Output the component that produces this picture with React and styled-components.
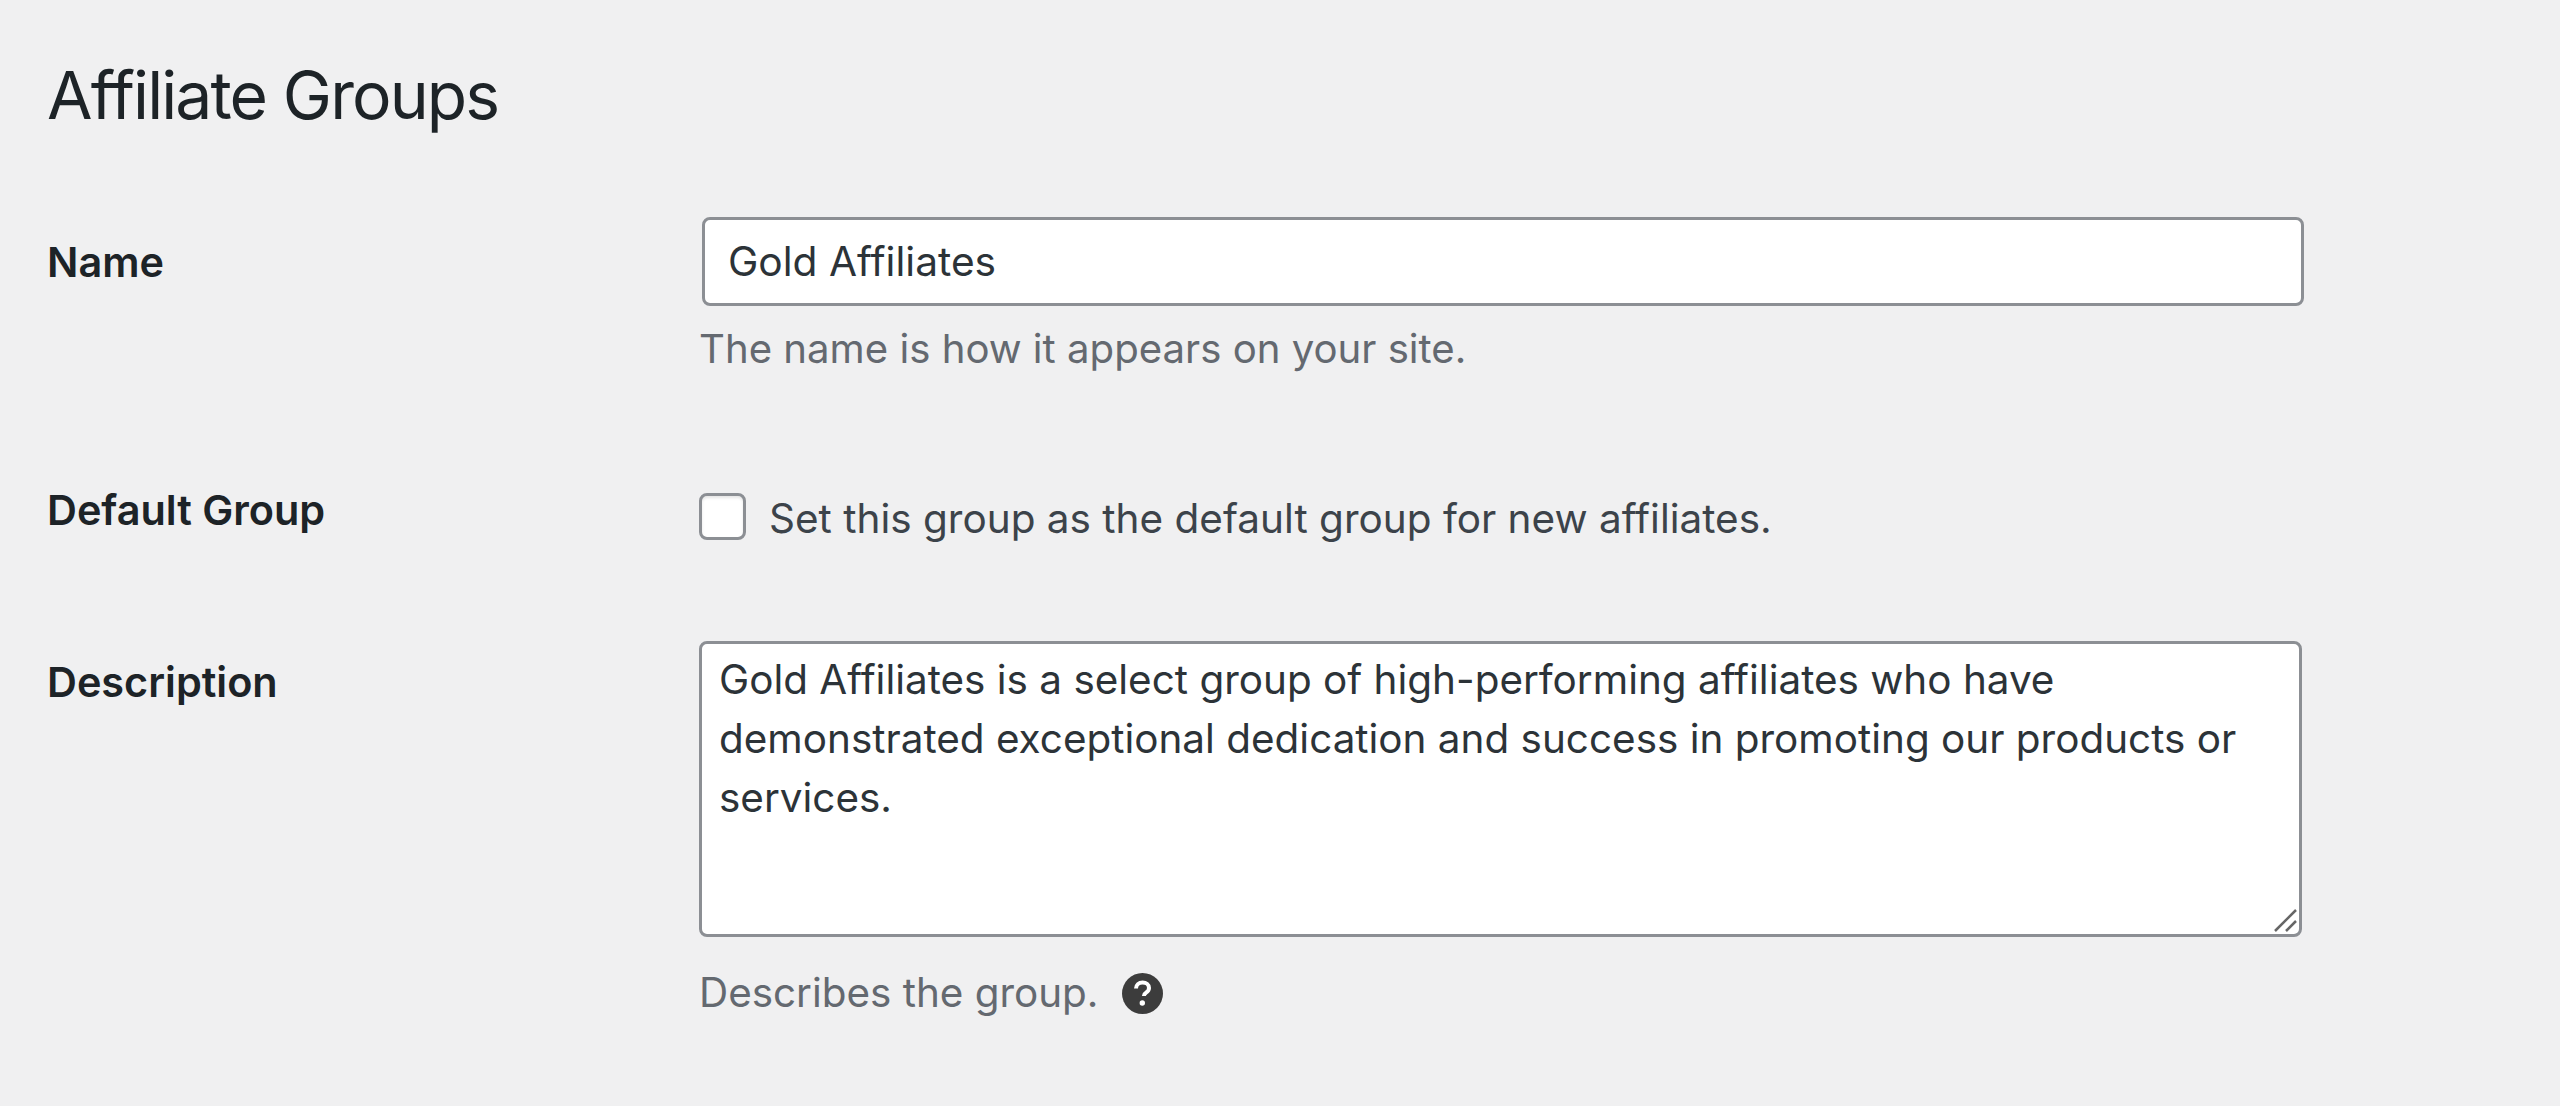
import React from 'react';
import styled, { createGlobalStyle } from 'styled-components';

const Global = createGlobalStyle`
  html, body { margin: 0; padding: 0; background: #f0f0f1; }
  body { font-family: Inter, "Noto Sans", sans-serif; color: #1d2327; min-height: 1106px; overflow: hidden; }
  * { box-sizing: border-box; }
`;
const Page = styled.main`
  padding: 56px 0 0 47px;
`;
const Title = styled.h1`
  margin: 0 0 83px;
  font-size: 66px;
  line-height: 78px;
  font-weight: 400;
  letter-spacing: -1.9px;
  color: #1d2327;
`;
const Row = styled.div`
  display: grid;
  grid-template-columns: 652px 1604px;
  margin-bottom: ${p => p.$gap}px;
`;
const Label = styled.label`
  font-size: 41.4px;
  line-height: 50px;
  font-weight: 600;
  padding-top: ${p => p.$top}px;
  color: #1d2327;
`;
const Field = styled.div`
  display: flex;
  flex-direction: column;
`;
const TextInput = styled.input`
  display: block;
  width: 1602px;
  height: 89px;
  margin-left: 3px;
  padding: 0 23px;
  border: 3px solid #8c8f94;
  border-radius: 8px;
  background: #fff;
  font: 400 40.7px Inter, sans-serif;
  color: #2c3338;
  outline: none;
`;
const Help = styled.p`
  display: flex;
  align-items: center;
  gap: 24px;
  margin: ${p => p.$top}px 0 0;
  font-size: ${p => p.$size}px;
  line-height: 56px;
  color: #646970;
`;
const CheckRow = styled.label`
  display: flex;
  align-items: center;
  gap: 23px;
  padding-top: 6px;
  font-size: 40.5px;
  line-height: 56px;
  color: #3c434a;
`;
const CheckBox = styled.input`
  appearance: none;
  display: block;
  width: 47px;
  height: 47px;
  margin: 0 0 6px;
  border: 3px solid #8c8f94;
  border-radius: 8px;
  background: #fff;
  box-shadow: inset 0 2px 3px rgba(0,0,0,.1);
`;
const AreaWrap = styled.div`
  position: relative;
  width: 1603px;
  height: 296px;
`;
const TextArea = styled.textarea`
  display: block;
  width: 100%;
  height: 100%;
  padding: 6px 17px;
  border: 3px solid #8c8f94;
  border-radius: 8px;
  background: #fff;
  font: 400 40.45px/59px Inter, sans-serif;
  color: #2c3338;
  outline: none;
  resize: none;
  overflow: hidden;
`;
const Grip = styled.svg`
  position: absolute;
  right: 3px;
  bottom: 3px;
  width: 26px;
  height: 26px;
`;
const HelpIcon = styled.svg`
  width: 41px;
  height: 41px;
  flex: none;
`;

export default function App() {
  return (
    <Page>
      <Global />
      <Title>Affiliate Groups</Title>
      <Row $gap={108}>
        <Label $top={20}>Name</Label>
        <Field>
          <TextInput readOnly value="Gold Affiliates" />
          <Help $top={15} $size={40.15}>The name is how it appears on your site.</Help>
        </Field>
      </Row>
      <Row $gap={94}>
        <Label $top={0}>Default Group</Label>
        <CheckRow>
          <CheckBox type="checkbox" />
          Set this group as the default group for new affiliates.
        </CheckRow>
      </Row>
      <Row $gap={0}>
        <Label $top={16}>Description</Label>
        <Field>
          <AreaWrap>
            <TextArea readOnly value="Gold Affiliates is a select group of high-performing affiliates who have demonstrated exceptional dedication and success in promoting our products or services." />
            <Grip viewBox="0 0 26 26">
              <path d="M2 23 L23 2 M13 23 L23 13" stroke="#666" strokeWidth="2.5" fill="none" />
            </Grip>
          </AreaWrap>
          <Help $top={28} $size={40.4}>
            Describes the group.
            <HelpIcon viewBox="0 0 41 41">
              <circle cx="20.5" cy="20.5" r="20.5" fill="#3c3c3c" />
              <path d="M14 15.5c0-3.6 2.8-6 6.6-6 3.7 0 6.4 2.2 6.4 5.4 0 2.3-1.2 3.6-3 4.8-1.6 1-2.1 1.7-2.1 3.3" fill="none" stroke="#fff" strokeWidth="4" />
              <circle cx="20.3" cy="30" r="2.7" fill="#fff" />
            </HelpIcon>
          </Help>
        </Field>
      </Row>
    </Page>
  );
}
